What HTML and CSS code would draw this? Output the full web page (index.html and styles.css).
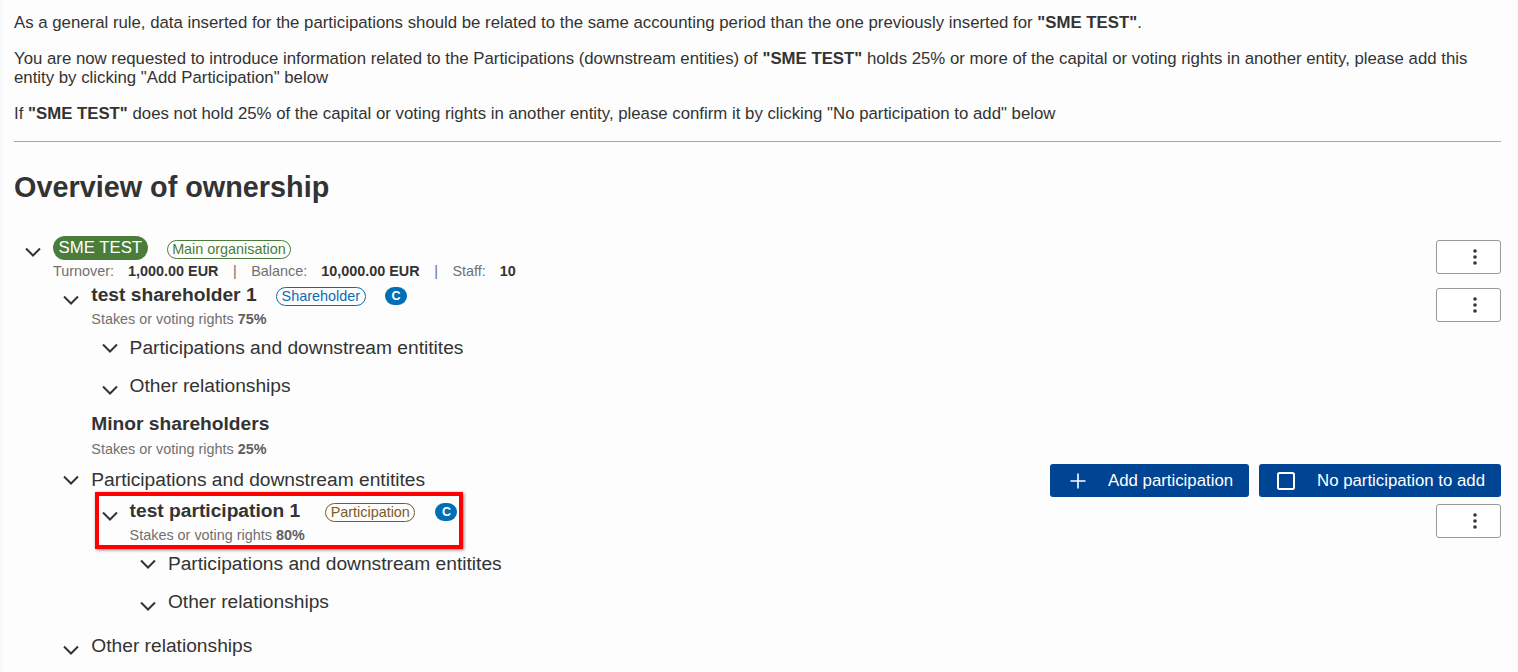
FILE: index.html
```html
<!DOCTYPE html>
<html lang="en">

<head>
  <meta charset="UTF-8">
  <title>Overview of ownership</title>
  <link rel="stylesheet" href="styles.css">
</head>

<body>
  <svg class="icon-defs" width="0" height="0">
    <symbol id="chevron" viewBox="0 0 16 10">
      <path d="M1 1.5 L8 8.5 L15 1.5" fill="none" stroke="#2f3338" stroke-width="2" />
    </symbol>
    <symbol id="dots" viewBox="0 0 4 16">
      <circle cx="2" cy="2" r="1.8" fill="#333" />
      <circle cx="2" cy="8" r="1.8" fill="#333" />
      <circle cx="2" cy="14" r="1.8" fill="#333" />
    </symbol>
  </svg>

  <div class="intro">
    <p>As a general rule, data inserted for the participations should be related to the same accounting period than the one previously inserted for <b>"SME TEST"</b>.</p>
    <p>You are now requested to introduce information related to the Participations (downstream entities) of <b>"SME TEST"</b> holds 25% or more of the capital or voting rights in another entity, please add this<br>entity by clicking "Add Participation" below</p>
    <p>If <b>"SME TEST"</b> does not hold 25% of the capital or voting rights in another entity, please confirm it by clicking "No participation to add" below</p>
  </div>

  <hr class="divider">

  <h1 class="page-title">Overview of ownership</h1>

  <div class="tree">
    <div class="row row-main">
      <svg class="chevron chevron-low"><use href="#chevron" /></svg>
      <div class="row-body">
        <div class="row-head">
          <span class="pill-org">SME TEST</span>
          <span class="tag tag-main">Main organisation</span>
        </div>
        <div class="meta">
          <span>Turnover:</span><b>1,000.00 EUR</b><span class="sep">|</span><span>Balance:</span><b>10,000.00 EUR</b><span class="sep">|</span><span>Staff:</span><b>10</b>
        </div>
      </div>
      <button class="menu-button"><svg class="dots"><use href="#dots" /></svg></button>
    </div>

    <div class="level">
      <div class="row row-entity">
        <svg class="chevron chevron-low"><use href="#chevron" /></svg>
        <div class="row-body">
          <div class="row-head">
            <span class="entity-name">test shareholder 1</span>
            <span class="tag tag-shareholder">Shareholder</span>
            <span class="badge">C</span>
          </div>
          <div class="stakes">Stakes or voting rights <b>75%</b></div>
        </div>
        <button class="menu-button"><svg class="dots"><use href="#dots" /></svg></button>
      </div>

      <div class="level">
        <div class="row row-group"><svg class="chevron"><use href="#chevron" /></svg><span>Participations and downstream entitites</span></div>
        <div class="row row-group"><svg class="chevron chevron-low"><use href="#chevron" /></svg><span>Other relationships</span></div>
      </div>

      <div class="row row-minor">
        <div class="row-body">
          <div class="entity-name">Minor shareholders</div>
          <div class="stakes">Stakes or voting rights <b>25%</b></div>
        </div>
      </div>

      <div class="row row-group row-actions">
        <svg class="chevron"><use href="#chevron" /></svg><span>Participations and downstream entitites</span>
        <div class="actions">
          <button class="primary-button">
            <svg class="button-icon" viewBox="0 0 16 16"><path d="M8 0.5 V15.5 M0.5 8 H15.5" stroke="#fff" stroke-width="1.6" fill="none" /></svg>
            Add participation
          </button>
          <button class="primary-button primary-button-wide">
            <svg class="button-icon" viewBox="0 0 18 18"><rect x="1" y="1" width="16" height="16" rx="1.5" stroke="#fff" stroke-width="2" fill="none" /></svg>
            No participation to add
          </button>
        </div>
      </div>

      <div class="level">
        <div class="row row-entity row-highlighted">
          <div class="highlight"></div>
          <svg class="chevron chevron-low"><use href="#chevron" /></svg>
          <div class="row-body">
            <div class="row-head">
              <span class="entity-name">test participation 1</span>
              <span class="tag tag-participation">Participation</span>
              <span class="badge badge-wide-gap">C</span>
            </div>
            <div class="stakes">Stakes or voting rights <b>80%</b></div>
          </div>
          <button class="menu-button"><svg class="dots"><use href="#dots" /></svg></button>
        </div>
        <div class="level">
          <div class="row row-group"><svg class="chevron"><use href="#chevron" /></svg><span>Participations and downstream entitites</span></div>
          <div class="row row-group"><svg class="chevron chevron-low"><use href="#chevron" /></svg><span>Other relationships</span></div>
        </div>
      </div>

      <div class="row row-group row-last"><svg class="chevron chevron-low"><use href="#chevron" /></svg><span>Other relationships</span></div>
    </div>
  </div>
</body>

</html>
```

FILE: styles.css
```css
body {
  font-family: 'Liberation Sans', Arial, sans-serif;
  margin: 0;
  padding: 0 17px 0 14px;
  height: 672px;
  overflow: hidden;
  box-sizing: border-box;
  background-color: #fdfdfd;
  box-shadow: inset 3px 0 3px -1px #f4f6f9;
  color: #333;
  font-size: 16.8px;
}

.icon-defs {
  position: absolute;
}

.intro {
  padding-top: 14px;
}

.intro p {
  margin: 0 0 17.5px 0;
  line-height: 18.5px;
}

.divider {
  border: none;
  border-top: 1px solid #a8a8a8;
  margin: 18px 0 0 0;
}

.page-title {
  font-size: 28.8px;
  line-height: 34px;
  font-weight: bold;
  margin: 28px 0 0 0;
}

.tree {
  margin-top: 32px;
}

.level {
  margin-left: 38.3px;
}

.row {
  display: flex;
  position: relative;
}

.chevron {
  flex: none;
  width: 16px;
  height: 10px;
  margin: 0 12px 0 11px;
}

.row-group {
  height: 38px;
  align-items: center;
  font-size: 19.2px;
  line-height: 22px;
  padding-top: 2px;
  box-sizing: border-box;
}

.row-group .chevron {
  margin-top: -1px;
}

.row-group .chevron-low {
  margin-top: 7px;
}

.row-actions {
  height: 32px;
}

.row-last {
  margin-top: 6px;
}

.row-main {
  height: 48px;
}

.row-main .chevron,
.row-entity .chevron {
  margin-top: 11px;
}

.row-entity {
  height: 44px;
}

.row-body {
  flex: 1;
  min-width: 0;
}

.row-head {
  display: flex;
  align-items: center;
}

.pill-org {
  background: #4a7c3a;
  color: #fff;
  border-radius: 12px;
  height: 24px;
  line-height: 23px;
  padding: 0 5.5px;
  font-size: 16.8px;
  margin-right: 19px;
}

.tag {
  border: 1px solid;
  border-radius: 10px;
  font-size: 14.4px;
  line-height: 17px;
  padding: 0 4.5px;
  margin-top: 2px;
}

.tag-main {
  color: #4a7c3a;
  border-color: #4a7c3a;
}

.tag-shareholder {
  color: #0a6cb4;
  border-color: #0a6cb4;
  margin-left: 19px;
  padding: 0 5px;
}

.tag-participation {
  color: #7c5a24;
  border-color: #7c5a24;
  margin-left: 25px;
}

.badge {
  width: 22px;
  height: 18px;
  border-radius: 10px;
  background: #006fb4;
  color: #fff;
  font-size: 12.5px;
  font-weight: bold;
  line-height: 18px;
  text-align: center;
  margin: 2px 0 0 19px;
}

.badge-wide-gap {
  margin-left: 20px;
}

.meta {
  font-size: 14.4px;
  line-height: 16px;
  margin-top: 3px;
  color: #707070;
  display: flex;
}

.meta span {
  margin-right: 14px;
}

.meta b {
  color: #333;
}

.meta .sep {
  margin-left: 14.5px;
  margin-right: 14.5px;
}

.entity-name {
  font-size: 19.2px;
  font-weight: bold;
  line-height: 22px;
}

.stakes {
  font-size: 14.4px;
  line-height: 16px;
  color: #707070;
  margin-top: 5px;
}

.stakes b {
  color: #606060;
}

.row-minor {
  padding-left: 39px;
  height: 59px;
  padding-top: 9px;
  box-sizing: border-box;
}

.row-minor .stakes {
  margin-top: 6px;
}

.row-highlighted {
  margin-top: 5px;
}

.highlight {
  position: absolute;
  left: 4.4px;
  top: -8px;
  width: 368px;
  height: 57px;
  box-sizing: border-box;
  border: 4px solid #f00;
  box-shadow: 1px 1px 3px rgba(0, 0, 0, 0.5);
}

.menu-button {
  flex: none;
  width: 65px;
  height: 34px;
  background: #fff;
  border: 1px solid #999;
  border-radius: 3px;
  padding: 0;
  display: flex;
  align-items: center;
  justify-content: center;
  margin-top: 4px;
}

.dots {
  width: 4px;
  height: 16px;
  margin-left: 13px;
}

.actions {
  margin-left: auto;
  display: flex;
  gap: 10px;
  align-self: flex-start;
  margin-top: -1px;
}

.primary-button {
  font-family: 'Liberation Sans', Arial, sans-serif;
  background-color: #004494;
  color: #fff;
  border: none;
  border-radius: 3px;
  height: 33px;
  font-size: 16.8px;
  display: flex;
  align-items: center;
  padding: 0 16px 0 20px;
}

.button-icon {
  width: 16px;
  height: 16px;
  margin-right: 22px;
}

.primary-button-wide {
  padding-left: 18px;
}

.primary-button-wide .button-icon {
  width: 18px;
  height: 18px;
}
```
